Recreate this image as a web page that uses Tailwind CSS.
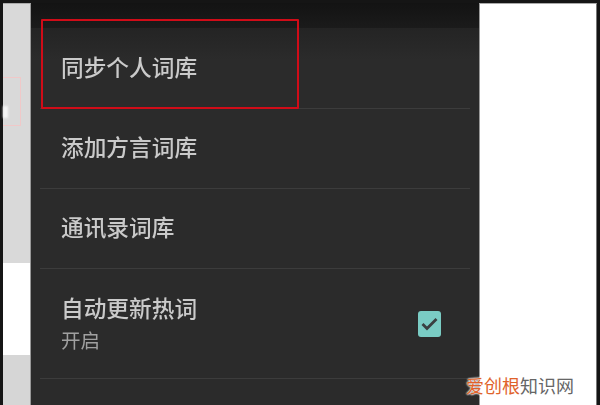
<!DOCTYPE html>
<html lang="zh">
<head>
<meta charset="UTF-8">
<title>词库设置</title>
<script src="https://cdn.jsdelivr.net/npm/@tailwindcss/browser@4"></script>
</head>
<body class="w-[600px] h-[405px] overflow-hidden bg-[#151515] font-['Liberation_Sans','Noto_Sans_CJK_SC',sans-serif]">
<div class="relative w-[600px] h-[405px] flex pt-[3px] pl-[3px] pr-[3px]">
  <!-- left page behind the menu -->
  <div class="relative w-[28px] flex flex-col border-r border-[#999] border-t border-t-[#aaa]">
    <div class="h-[259px] bg-[#d9d9d9]"></div>
    <div class="h-[92px] bg-white"></div>
    <div class="flex-1 bg-[#d6d6d6]"></div>
    <div class="absolute left-0 top-[73px] w-[18px] h-[49px] border border-[#f0c8c8] border-l-0"></div>
    <div class="absolute left-0 top-[102px] w-[5px] h-[12px] bg-[#f4f4f4] blur-[1px]"></div>
  </div>

  <!-- menu -->
  <div class="w-[448px] flex flex-col bg-[#2b2b2b] blur-[0.7px]">
    <div class="h-[25px] bg-gradient-to-b from-[#131313] to-[#1b1b1b]"></div>
    <div class="h-[80px] flex items-center pl-[30px] text-[22.7px] font-medium text-[#cacaca] bg-gradient-to-b from-[#242424] to-[#2b2b2b] to-[40%]">同步个人词库</div>
    <div class="mx-[9px] h-[1px] bg-[#3c3c3c]"></div>
    <div class="h-[79px] flex items-center pl-[30px] text-[22.7px] font-medium text-[#cacaca]">添加方言词库</div>
    <div class="mx-[9px] h-[1px] bg-[#3c3c3c]"></div>
    <div class="h-[79px] flex items-center pl-[30px] text-[22.7px] font-medium text-[#cacaca]">通讯录词库</div>
    <div class="mx-[9px] h-[1px] bg-[#3c3c3c]"></div>
    <div class="h-[109px] flex items-center justify-between pl-[30px] pr-[38px]">
      <div class="flex flex-col">
        <span class="text-[22.7px] leading-[30px] font-medium text-[#cacaca]">自动更新热词</span>
        <span class="mt-[4px] text-[19.5px] leading-[26px] text-[#a0a0a0]">开启</span>
      </div>
      <div class="w-[23px] h-[26px] rounded-[3px] bg-[#7accc4] flex items-center justify-center">
        <svg width="17" height="14" viewBox="0 0 17 14" fill="none" stroke="#3a3f40" stroke-width="2.8"><path d="M1.5 7 6 11.5 15.5 2"/></svg>
      </div>
    </div>
    <div class="mx-[9px] h-[1px] bg-[#3c3c3c]"></div>
    <div class="flex-1"></div>
  </div>

  <!-- right page -->
  <div class="flex-1 bg-white border-l border-[#999] border-t border-t-[#aaa] border-r border-r-[#777]"></div>

  <!-- red annotation box -->
  <div class="absolute left-[41px] top-[19px] w-[258px] h-[90px] border-2 border-[#d00c18] rounded-[1px] blur-[0.5px]"></div>

  <!-- watermark -->
  <div class="absolute left-[466px] top-[373px] flex text-[18px] leading-[28px]">
    <span class="text-[#e0622a] [text-shadow:0_0_2px_#fff,0_0_2px_#fff,0_0_2px_#fff]">爱创根</span>
    <span class="text-[#666]">知识网</span>
  </div>
</div>
</body>
</html>
